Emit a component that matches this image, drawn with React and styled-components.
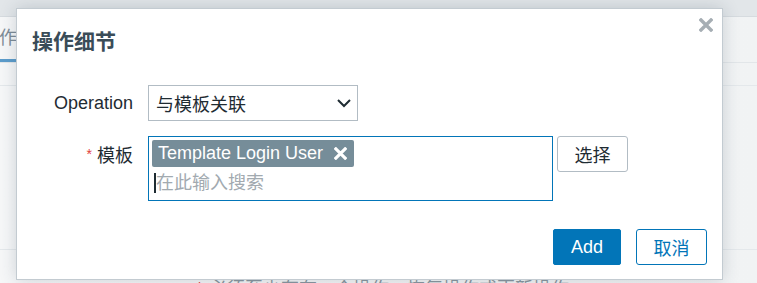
import React from "react";
import styled, { createGlobalStyle } from "styled-components";

const colors = {
  text: "#1f2c33",
  title: "#3a4c58",
  blue: "#0275b8",
  border: "#b2bcc4",
  tag: "#768d99",
  muted: "#a2aab0",
  red: "#e0403a",
};

const GlobalStyle = createGlobalStyle`
  html, body {
    margin: 0;
    padding: 0;
    background: #f3f4f5;
    font-family: "Liberation Sans", "Noto Sans CJK SC", sans-serif;
    font-size: 18px;
    color: ${colors.text};
  }
`;

const Page = styled.div`
  position: relative;
  width: 757px;
  height: 283px;
  overflow: hidden;
  display: flex;
  flex-direction: column;
  background: linear-gradient(90deg, #f6f7f8 0%, #f1f3f4 100%);
`;

const TopBand = styled.div`
  height: 16px;
  flex-shrink: 0;
  background: #e2e6e9;
  border-bottom: 1px solid #d6dbdf;
`;

const TabBar = styled.div`
  height: 45px;
  flex-shrink: 0;
  display: flex;
  align-items: flex-end;
  border-bottom: 1px solid #e2e6e9;
`;

const Tab = styled.div`
  margin-left: -19px;
  padding: 0 20px 0 0;
  height: 45px;
  line-height: 42px;
  color: #7d8c97;
  border-bottom: 3px solid #5c9ccb;
  box-sizing: border-box;
  width: 200px;
`;

const TableRow = styled.div`
  height: ${(p) => p.h}px;
  flex-shrink: 0;
  border-bottom: 1px solid #e4e8eb;
`;

const Note = styled.div`
  padding-left: 196px;
  margin-top: 30px;
  line-height: 18px;
  color: #8a979f;
  white-space: nowrap;
  & span {
    color: ${colors.red};
    margin-right: 6px;
  }
`;

const Dialog = styled.div`
  position: absolute;
  left: 16px;
  top: 8px;
  width: 705px;
  height: 270px;
  background: #fff;
  border: 1px solid #c3cbd1;
  box-shadow: 0 0 16px rgba(40, 60, 80, 0.2);
  display: flex;
  flex-direction: column;
`;

const Header = styled.div`
  padding: 19px 15px 0;
`;

const Title = styled.h4`
  margin: 0;
  font-size: 21px;
  line-height: 28px;
  font-weight: bold;
  color: ${colors.title};
`;

const CloseBtn = styled.button`
  position: absolute;
  top: 9px;
  right: 9px;
  width: 14px;
  height: 14px;
  padding: 0;
  border: 0;
  background: none;
  display: flex;
`;

const Form = styled.div`
  margin-top: 29px;
  padding: 0 15px;
  display: grid;
  grid-template-columns: 101px 1fr;
  column-gap: 15px;
  row-gap: 15px;
`;

const Label = styled.label`
  text-align: right;
  line-height: 36px;
  white-space: nowrap;
`;

const Asterisk = styled.span`
  color: ${colors.red};
  font-size: 14px;
  vertical-align: 3px;
  margin-right: 5px;
`;

const Field = styled.div`
  display: flex;
  align-items: flex-start;
  gap: 4px;
`;

const Select = styled.div`
  width: 210px;
  height: 36px;
  box-sizing: border-box;
  border: 1px solid ${colors.border};
  display: flex;
  align-items: center;
  justify-content: space-between;
  padding: 0 5px 0 7px;
`;

const MultiSelect = styled.div`
  width: 405px;
  height: 65px;
  box-sizing: border-box;
  border: 1.5px solid ${colors.blue};
  padding: 3px 3px;
  display: flex;
  flex-direction: column;
  align-items: flex-start;
`;

const Tag = styled.span`
  height: 27px;
  width: 202px;
  box-sizing: border-box;
  background: ${colors.tag};
  color: #fff;
  border-radius: 2px;
  display: flex;
  align-items: center;
  justify-content: space-between;
  padding: 0 7px 0 6px;
  line-height: 27px;
  white-space: nowrap;
`;

const SearchLine = styled.div`
  margin-top: 4px;
  display: flex;
  align-items: center;
  height: 24px;
  padding-left: 2px;
  color: ${colors.muted};
  line-height: 24px;
`;

const Caret = styled.span`
  width: 2px;
  height: 20px;
  background: ${colors.text};
  margin-right: 0;
`;

const Button = styled.button`
  height: 36px;
  width: ${(p) => p.w}px;
  box-sizing: border-box;
  font-family: inherit;
  font-size: 18px;
  border-radius: ${(p) => (p.primary ? 2 : 3)}px;
  border: 1px solid ${(p) => (p.primary ? colors.blue : p.outline ? colors.blue : colors.border)};
  background: ${(p) => (p.primary ? colors.blue : "#fff")};
  color: ${(p) => (p.primary ? "#fff" : p.outline ? colors.blue : colors.text)};
  padding: 0;
  flex-shrink: 0;
`;

const Footer = styled.div`
  margin-top: auto;
  padding: 0 15px 14px;
  display: flex;
  justify-content: flex-end;
  gap: 15px;
`;

const Cross = ({ size, color, width }) => (
  <svg width={size} height={size} viewBox="0 0 14 14">
    <path d="M2 2 L12 12 M12 2 L2 12" stroke={color} strokeWidth={width} strokeLinecap="square" />
  </svg>
);

const Chevron = () => (
  <svg width="16" height="10" viewBox="0 0 16 10">
    <path d="M2 2 L8 8 L14 2" fill="none" stroke={colors.text} strokeWidth="2" />
  </svg>
);

export default function App() {
  return (
    <>
      <GlobalStyle />
      <Page>
        <TopBand />
        <TabBar>
          <Tab>操作</Tab>
        </TabBar>
        <TableRow h={22} />
        <TableRow h={163} />
        <Note>
          <span>*</span>必须至少存在一个操作、恢复操作或更新操作。
        </Note>

        <Dialog>
          <Header>
            <Title>操作细节</Title>
          </Header>
          <CloseBtn aria-label="close">
            <Cross size={14} color="#a6aeb4" width={3.4} />
          </CloseBtn>

          <Form>
            <Label>Operation</Label>
            <Field>
              <Select>
                <span>与模板关联</span>
                <Chevron />
              </Select>
            </Field>

            <Label>
              <Asterisk>*</Asterisk>模板
            </Label>
            <Field>
              <MultiSelect>
                <Tag>
                  Template Login User
                  <Cross size={13} color="#fff" width={3.4} />
                </Tag>
                <SearchLine>
                  <Caret />
                  在此输入搜索
                </SearchLine>
              </MultiSelect>
              <Button w={71}>选择</Button>
            </Field>
          </Form>

          <Footer>
            <Button primary w={68}>Add</Button>
            <Button outline w={71}>取消</Button>
          </Footer>
        </Dialog>
      </Page>
    </>
  );
}
